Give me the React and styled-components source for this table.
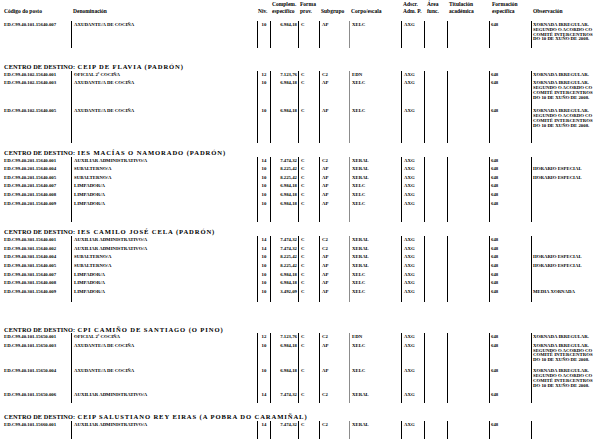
import styled, { createGlobalStyle } from "styled-components";

const GlobalStyle = createGlobalStyle`
  html, body {
    margin: 0;
    padding: 0;
    background: #fff;
  }
  body {
    font-family: "Liberation Serif", "Times New Roman", serif;
    color: #000;
  }
`;

const COLS = "71px 186px 13px 28px 21px 30px 52px 23px 23px 42px 42px 1fr";

const LONG_OBS = [
  "XORNADA IRREGULAR.",
  "SEGUNDO O ACORDO CO",
  "COMITÉ INTERCENTROS",
  "DO 10 DE XUÑO DE 2008.",
];

const Page = styled.div`
  width: 616px;
  height: 439px;
  overflow: hidden;
  font-weight: bold;
`;

const HeadRow = styled.div`
  display: grid;
  grid-template-columns: ${COLS};
  height: 17px;
  padding-top: 1px;
  box-sizing: border-box;
  font-size: 5.5px;
  line-height: 7px;
`;

const HeadCell = styled.div`
  padding-left: ${(p) => p.$pad ?? 2}px;
  white-space: nowrap;
`;

const HeadLine = styled.div`
  height: 7px;
`;

const Title = styled.div`
  display: flex;
  align-items: center;
  height: 8.5px;
  margin-top: ${(p) => p.$gap}px;
  padding-left: 4px;
  font-size: 6.3px;
  white-space: nowrap;
`;

const TitleLabel = styled.span`
  width: 73.5px;
  flex: none;
  letter-spacing: 0.1px;
`;

const TitleName = styled.span`
  font-size: 6.6px;
  letter-spacing: 0.9px;
`;

const Row = styled.div`
  display: grid;
  grid-template-columns: ${COLS};
  height: ${(p) => p.$h}px;
  margin-top: ${(p) => p.$gap || 0}px;
  font-size: 4.8px;
  line-height: 4.8px;
`;

const Cell = styled.div`
  padding: 2px ${(p) => p.$right ?? 0}px 0 ${(p) => p.$pad ?? 2}px;
  border-left: 1px solid ${(p) => p.$rule || "#000"};
  text-align: ${(p) => p.$align || "left"};
  white-space: nowrap;
  overflow: hidden;
`;

const CodeCell = styled.div`
  padding: 2px 0 0 4px;
  white-space: nowrap;
`;

const ObsLine = styled.div`
  height: 4.8px;
`;

const HEAD = [
  { pad: 4, lines: ["", "Código do posto"] },
  { lines: ["", "Denominación"] },
  { pad: 1, lines: ["", "Niv."] },
  { lines: ["Complem.", "específico"] },
  { lines: ["Forma", "prov."] },
  { lines: ["", "Subgrupo"] },
  { lines: ["", "Corpo/escala"] },
  { lines: ["Adscr.", "Adm. P."] },
  { pad: 3, lines: ["Área", "func."] },
  { lines: ["Titulación", "académica"] },
  { pad: 3, lines: ["Formación", "específica"] },
  { lines: ["", "Observación"] },
];

const JOBS = {
  axud: ["AXUDANTE/A DE COCIÑA", "10", "6.984,18", "AP", "XELC"],
  ofic: ["OFICIAL 2ª COCIÑA", "12", "7.123,76", "C2", "EDN"],
  aux: ["AUXILIAR ADMINISTRATIVO/A", "14", "7.474,32", "C2", "XERAL"],
  sub: ["SUBALTERNO/A", "10", "8.225,42", "AP", "XERAL"],
  limp: ["LIMPADOR/A", "10", "6.984,18", "AP", "XELC"],
  limp2: ["LIMPADOR/A", "10", "3.492,09", "AP", "XELC"],
};

const mk = (code, job, h, obs = []) => ({ code, job: JOBS[job], h, obs });

const FIRST = mk("ED.C99.40.101.15640.007", "axud", 27, LONG_OBS);

const SECTIONS = [
  {
    name: "CEIP DE FLAVIA (PADRÓN)",
    gap: 14.25,
    rows: [
      mk("ED.C99.40.102.15640.001", "ofic", 8.6, ["XORNADA IRREGULAR."]),
      mk("ED.C99.40.102.15640.003", "axud", 28, LONG_OBS),
      mk("ED.C99.40.102.15640.005", "axud", 36, LONG_OBS),
    ],
  },
  {
    name: "IES MACÍAS O NAMORADO (PADRÓN)",
    gap: 4.7,
    rows: [
      mk("ED.C99.40.201.15640.001", "aux", 8.6),
      mk("ED.C99.40.201.15640.004", "sub", 8.6, ["HORARIO ESPECIAL"]),
      mk("ED.C99.40.201.15640.005", "sub", 8.6, ["HORARIO ESPECIAL"]),
      mk("ED.C99.40.201.15640.007", "limp", 8.6),
      mk("ED.C99.40.201.15640.008", "limp", 8.6),
      mk("ED.C99.40.201.15640.009", "limp", 22.5),
    ],
  },
  {
    name: "IES CAMILO JOSÉ CELA (PADRÓN)",
    gap: 5.7,
    rows: [
      mk("ED.C99.40.301.15640.001", "aux", 8.6),
      mk("ED.C99.40.301.15640.002", "aux", 8.6),
      mk("ED.C99.40.301.15640.004", "sub", 8.6, ["HORARIO ESPECIAL"]),
      mk("ED.C99.40.301.15640.005", "sub", 8.6, ["HORARIO ESPECIAL"]),
      mk("ED.C99.40.301.15640.007", "limp", 8.6),
      mk("ED.C99.40.301.15640.008", "limp", 8.6),
      mk("ED.C99.40.301.15640.009", "limp2", 14.5, ["MEDIA XORNADA"]),
    ],
  },
  {
    name: "CPI CAMIÑO DE SANTIAGO (O PINO)",
    gap: 22.5,
    rows: [
      mk("ED.C99.40.101.15650.001", "ofic", 8.6, ["XORNADA IRREGULAR."]),
      mk("ED.C99.40.101.15650.003", "axud", 25.4, LONG_OBS),
      mk("ED.C99.40.101.15650.004", "axud", 23.5, LONG_OBS),
      mk("ED.C99.40.101.15650.006", "aux", 12.75),
    ],
  },
  {
    name: "CEIP SALUSTIANO REY EIRAS (A POBRA DO CARAMIÑAL)",
    gap: 8.75,
    rows: [mk("ED.C99.40.101.15660.001", "aux", 20)],
  },
];

const DataRow = ({ row, gap }) => {
  const [denom, niv, comp, sub, corpo] = row.job;
  return (
    <Row $h={row.h} $gap={gap}>
      <CodeCell>{row.code}</CodeCell>
      <Cell>{denom}</Cell>
      <Cell $pad={0} $align="center">{niv}</Cell>
      <Cell $pad={0} $right={1} $align="right">{comp}</Cell>
      <Cell>C</Cell>
      <Cell>{sub}</Cell>
      <Cell $rule="#8c8c8c">{corpo}</Cell>
      <Cell>AXG</Cell>
      <Cell />
      <Cell />
      <Cell $pad={1}>648</Cell>
      <Cell $pad={1}>
        {row.obs.map((line) => (
          <ObsLine key={line}>{line}</ObsLine>
        ))}
      </Cell>
    </Row>
  );
};

const App = () => {
  return (
    <Page>
      <GlobalStyle />
      <HeadRow>
        {HEAD.map((h, i) => (
          <HeadCell key={i} $pad={h.pad}>
            <HeadLine>{h.lines[0]}</HeadLine>
            <HeadLine>{h.lines[1]}</HeadLine>
          </HeadCell>
        ))}
      </HeadRow>
      <DataRow row={FIRST} gap={4} />
      {SECTIONS.map((s) => (
        <div key={s.name}>
          <Title $gap={s.gap}>
            <TitleLabel>CENTRO DE DESTINO:</TitleLabel>
            <TitleName>{s.name}</TitleName>
          </Title>
          {s.rows.map((r) => (
            <DataRow key={r.code} row={r} />
          ))}
        </div>
      ))}
    </Page>
  );
};

export default App;
